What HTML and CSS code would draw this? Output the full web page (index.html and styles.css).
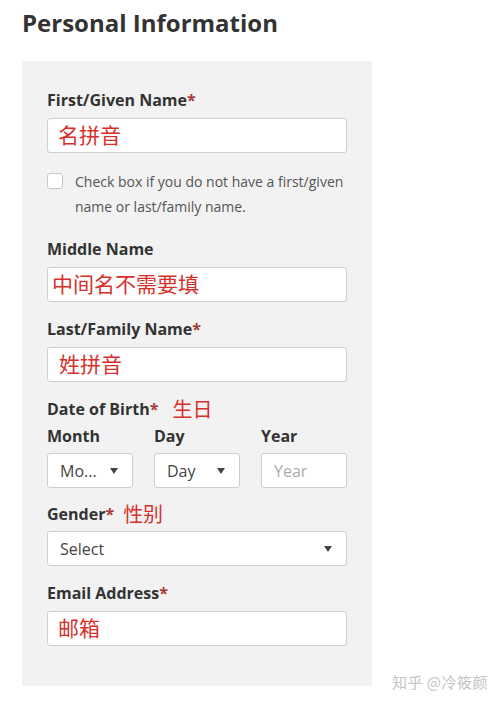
FILE: index.html
```html
<!DOCTYPE html>
<html lang="en">
<head>
<meta charset="utf-8">
<title>Personal Information</title>
<link rel="stylesheet" href="styles.css">
</head>
<body>
<h1 class="title">Personal Information</h1>
<div class="panel">
  <div class="field">
    <div class="label">First/Given Name<span class="req">*</span></div>
    <div class="input"><span class="cn">名拼音</span></div>
  </div>
  <div class="check-row">
    <span class="box"></span>
    <span class="check-text">Check box if you do not have a first/given name or last/family name.</span>
  </div>
  <div class="field field-mid">
    <div class="label">Middle Name</div>
    <div class="input input-tight"><span class="cn">中间名不需要填</span></div>
  </div>
  <div class="field">
    <div class="label">Last/Family Name<span class="req">*</span></div>
    <div class="input input-wide"><span class="cn">姓拼音</span></div>
  </div>
  <div class="field">
    <div class="label">Date of Birth<span class="req">*</span><span class="note note-dob">生日</span></div>
    <div class="dob">
      <div class="sub">
        <div class="label">Month</div>
        <div class="input select"><span class="val">Mo...</span><span class="caret"></span></div>
      </div>
      <div class="sub">
        <div class="label">Day</div>
        <div class="input select"><span class="val">Day</span><span class="caret"></span></div>
      </div>
      <div class="sub">
        <div class="label">Year</div>
        <div class="input select"><span class="val ph">Year</span></div>
      </div>
    </div>
  </div>
  <div class="field field-gender">
    <div class="label">Gender<span class="req">*</span><span class="note note-gender">性别</span></div>
    <div class="input select"><span class="val">Select</span><span class="caret"></span></div>
  </div>
  <div class="field">
    <div class="label">Email Address<span class="req">*</span></div>
    <div class="input"><span class="cn">邮箱</span></div>
  </div>
</div>
<div class="watermark">知乎 @冷筱颜</div>
</body>
</html>
```
FILE: styles.css
```css
* { box-sizing: border-box; }
html, body { margin: 0; padding: 0; background: #fff; }
body {
  width: 496px;
  height: 704px;
  position: relative;
  font-family: "Open Sans", "Noto Sans CJK SC", sans-serif;
  color: #333;
  overflow: hidden;
}
.title {
  margin: 0;
  padding: 6px 0 0 22px;
  font-size: 24px;
  line-height: 34px;
  font-weight: 700;
  color: #333;
}
.panel {
  margin: 21px 0 0 22px;
  width: 350px;
  background: #f2f2f2;
  padding: 28px 25px 40px 25px;
}
.field { margin-top: 16px; }
.field:first-child { margin-top: 0; }
.field-mid { margin-top: 19px; }
.field-gender { margin-top: 15px; }
.field-gender .label { margin-bottom: 6px; }
.label {
  display: flex;
  align-items: center;
  height: 22px;
  font-size: 16px;
  line-height: 22px;
  font-weight: 700;
  color: #333;
  margin-bottom: 7px;
  white-space: nowrap;
}
.req { color: #a83a36; }
.note {
  font-family: "Noto Sans CJK SC", sans-serif;
  font-weight: 400;
  font-size: 20px;
  line-height: 22px;
  color: #d6302b;
}
.note-dob { margin-left: 14px; }
.note-gender { margin-left: 9px; }
.input {
  height: 35px;
  background: #fff;
  border: 1px solid #cfcfcf;
  border-radius: 3px;
  padding: 0 10px;
  display: flex;
  align-items: center;
}
.input-tight { padding-left: 4px; }
.input-wide { padding-left: 11px; }
.cn {
  font-family: "Noto Sans CJK SC", sans-serif;
  font-size: 21px;
  line-height: 28px;
  color: #d6302b;
  margin-top: -3px;
}
.check-row {
  display: flex;
  align-items: flex-start;
  margin-top: 16px;
}
.box {
  flex: none;
  width: 16px;
  height: 16px;
  margin-top: 4px;
  background: #fff;
  border: 1px solid #c8c8c8;
  border-radius: 3px;
}
.check-text {
  margin-left: 12px;
  font-size: 14px;
  line-height: 25px;
  color: #555;
}
.dob {
  display: grid;
  grid-template-columns: 86px 86px 86px;
  column-gap: 21px;
  margin-top: -2px;
}
.sub .label { margin-bottom: 6px; }
.select {
  justify-content: space-between;
  padding: 0 14px 0 12px;
}
.val {
  font-size: 16px;
  line-height: 22px;
  color: #444;
}
.ph { color: #aaa; }
.caret {
  width: 0;
  height: 0;
  border-left: 4px solid transparent;
  border-right: 4px solid transparent;
  border-top: 6px solid #444;
}
.watermark {
  position: absolute;
  left: 392px;
  top: 672px;
  font-family: "Noto Sans CJK SC", sans-serif;
  font-size: 15px;
  line-height: 20px;
  color: #c4c4c4;
  letter-spacing: 0.5px;
}
```
